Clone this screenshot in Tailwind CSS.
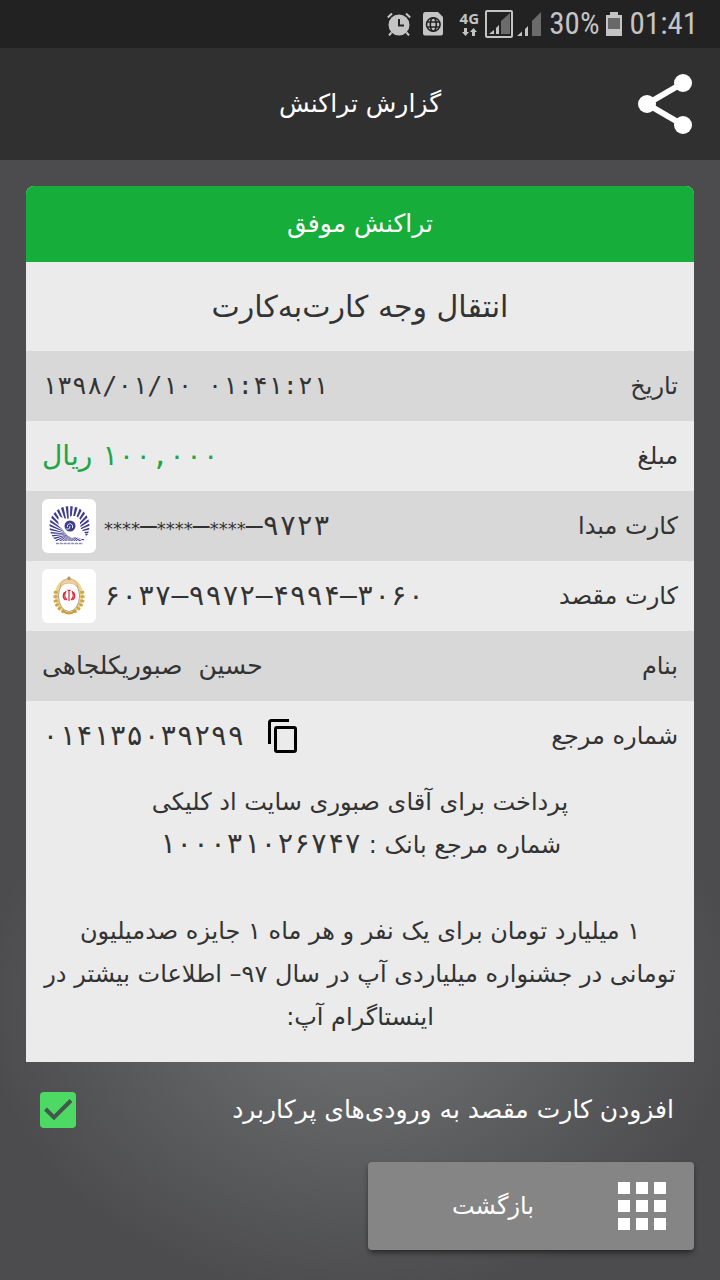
<!DOCTYPE html>
<html lang="fa" dir="rtl">
<head>
<meta charset="utf-8">
<meta name="viewport" content="width=device-width, initial-scale=1">
<title>گزارش تراکنش</title>
<script src="https://cdn.jsdelivr.net/npm/@tailwindcss/browser@4"></script>
</head>
<body class="min-h-screen flex flex-col bg-[#4c4c4e] bg-[radial-gradient(ellipse_380px_300px_at_50%_1000px,#707274,#4c4c4e)] font-['DejaVu_Sans',sans-serif] text-2xl text-[#333333]">

<!-- Status bar -->
<div dir="ltr" class="h-12 shrink-0 bg-[#222222] text-[#c4c4c4] flex items-center justify-end pr-[22px] font-['Roboto_Condensed','Liberation_Sans_Narrow',Roboto,sans-serif]">
  <svg class="w-6 h-6 mr-3" viewBox="0 0 24 24" fill="none" stroke="currentColor" aria-label="alarm"><circle cx="12" cy="13" r="10.5" fill="currentColor" stroke="none"/><path d="M.8 5.500 5 1.500M23.200 5.500 19 1.500M4.500 20.500 2 23.500M19.500 20.500 22 23.500" stroke-width="2"/><path d="M12 7v6.500h5" stroke="#222222" stroke-width="2"/></svg>
  <svg class="w-5 h-6 mr-4" viewBox="0 0 20 24" aria-label="data"><path d="M0 2.500Q0 0 2 0h13l5 5v16.500q0 2-2 2H2q-2 0-2-2z" fill="currentColor"/><g fill="none" stroke="#222222" stroke-width="1.600"><circle cx="10.300" cy="12.500" r="6.800"/><ellipse cx="10.300" cy="12.500" rx="3" ry="6.800"/><path d="M4.500 10h11.600M4.500 15h11.600"/></g></svg>
  <div class="w-5 mr-1.5 flex flex-col items-center gap-1">
    <span class="text-[15px] leading-3 font-bold font-['Open_Sans',sans-serif]">4G</span>
    <svg class="w-4 h-2" viewBox="0 0 16 8" fill="currentColor"><path d="M3 0h3v4h2L4.500 8 1 4h2zM11 8h3V4h2l-3.500-4L9 4h2z"/></svg>
  </div>
  <svg class="w-7 h-7 mr-1" viewBox="0 0 28 28" aria-label="signal 1"><rect x="1" y="1" width="26" height="26" rx="1" fill="none" stroke="currentColor" stroke-width="2"/><path d="M16 11l9-8v21h-9z" fill="#6b6b6b"/><path d="M4 24l5-4v4zM11 18l3-3v9h-3z" fill="currentColor"/></svg>
  <svg class="w-6 h-7 mr-2" viewBox="0 0 24 28" aria-label="signal 2"><path d="M15 11l9-9v24h-9z" fill="#6b6b6b"/><path d="M0 26l5-4.500V26zM8 19l3-3v10H8z" fill="currentColor"/></svg>
  <span class="text-[31px] leading-8">30%</span>
  <svg class="w-4 h-6 ml-1.5 mr-2" viewBox="0 0 16 24" aria-label="battery"><path d="M4 0h8v3h4v21H0V3h4z" fill="currentColor"/><path d="M2 6h12v11H2z" fill="#686868"/></svg>
  <span class="text-[31px] leading-8">01:41</span>
</div>

<!-- Title bar -->
<header class="h-28 shrink-0 bg-[#303030] text-white grid grid-cols-[56px_1fr_56px] items-center px-7">
  <button type="button" aria-label="اشتراک‌گذاری" class="w-14 h-16">
    <svg class="w-14 h-16" viewBox="0 0 56 64" fill="#fff"><path d="M47 11 11 32l36 21" fill="none" stroke="#fff" stroke-width="6"/><circle cx="47" cy="11" r="9"/><circle cx="11" cy="32" r="9"/><circle cx="47" cy="53" r="9"/></svg>
  </button>
  <h1 class="text-center leading-9 text-[25px]">گزارش تراکنش</h1>
</header>

<main class="px-[26px] pt-[26px] pb-[30px]">
  <section class="bg-[#ebebeb] rounded-t-lg overflow-hidden">
    <h2 class="bg-[#16ad3a] text-white h-19 flex items-center justify-center text-[25px]">تراکنش موفق</h2>
    <h3 class="h-[89px] flex items-center justify-center text-[30px]">انتقال وجه کارت‌به‌کارت</h3>
    <table class="w-full">
      <tbody>
        <tr class="h-[70px] bg-[#d8d8d8]"><th scope="row" class="pr-4 font-normal text-right">تاریخ</th><td class="pl-4"><div dir="ltr" class="font-['DejaVu_Sans_Mono',monospace] text-[25px]">۱۳۹۸/۰۱/۱۰ ۰۱:۴۱:۲۱</div></td></tr>
        <tr class="h-[70px]"><th scope="row" class="pr-4 font-normal text-right">مبلغ</th><td class="pl-4 text-left text-[28px] leading-10 text-[#20a544]"><span class="font-['DejaVu_Sans_Mono',monospace]">۱۰۰,۰۰۰</span> ریال</td></tr>
        <tr class="h-[70px] bg-[#d8d8d8]"><th scope="row" class="pr-4 font-normal text-right">کارت مبدا</th><td class="pl-4"><div dir="ltr" class="flex items-center gap-2">
          <svg class="w-[54px] h-[54px] shrink-0" viewBox="0 0 54 54" aria-label="بانک تجارت">
            <clipPath id="fan"><circle cx="27.500" cy="27" r="20"/></clipPath>
            <rect width="54" height="54" rx="6" fill="#fff"/>
            <g clip-path="url(#fan)"><circle cx="27.500" cy="35" r="17" fill="none" stroke="#3f3d8c" stroke-width="30" stroke-dasharray="1.600 1.367"/></g>
            <path d="M8 42h40v8H8z" fill="#fff"/>
            <path d="M17 17l4 2 5 1 3-3 5 0 4 3 0 5 1 5 4 4 1 5-5 1-5-2-4 1-5-3-4-5-4-4-1-5z" fill="#fff"/>
            <circle cx="28" cy="27" r="5.500" fill="#3f3d8c"/><path d="M25.500 28v-2q2.500-3 5 0v3M24 30h3l1-3" fill="none" stroke="#d8d8ee" stroke-width="1"/>
            <path d="M14 44.500h27" stroke="#8d8bb8" stroke-width="1.500" stroke-dasharray="3 .8"/></svg>
          <span class="font-['DejaVu_Sans_Mono',monospace] text-[28px] leading-10"><span class="text-lg font-['DejaVu_Sans',sans-serif]">****</span>–<span class="text-lg font-['DejaVu_Sans',sans-serif]">****</span>–<span class="text-lg font-['DejaVu_Sans',sans-serif]">****</span>–۹۷۲۳</span></div></td></tr>
        <tr class="h-[70px]"><th scope="row" class="pr-4 font-normal text-right">کارت مقصد</th><td class="pl-4"><div dir="ltr" class="flex items-center gap-2">
          <svg class="w-[54px] h-[54px] shrink-0" viewBox="0 0 54 54" aria-label="بانک ملی">
            <rect width="54" height="54" rx="6" fill="#fff"/>
            <ellipse cx="27" cy="27" rx="12.500" ry="16" fill="none" stroke="#ecd68f" stroke-width="3.500"/>
            <path d="M14 22q-3 16 9 21M40 22q3 16-9 21" fill="none" stroke="#cfa545" stroke-width="4" stroke-dasharray="2.500 1.800"/>
            <ellipse cx="27" cy="27" rx="10.500" ry="15.500" fill="#fff" stroke="#a9a18a" stroke-width="1"/>
            <path d="M18 18q1-7 9-8 8 1 9 8-4-4-9-4t-9 4z" fill="#f3cfa4" stroke="#d1ab68" stroke-width=".7"/>
            <path d="M27 7l2 2.500-2 2-2-2z" fill="#a3986d"/>
            <path d="M27 22v10M24 22q-3 5 1 9M30 22q3 5-1 9M22.500 23q-3 5 1 8M31.500 23q3 5-1 8M25.500 21q1.500 1 3 0" fill="none" stroke="#de2434" stroke-width="1.200"/>
            <path d="M21 42q6 5 12 0" fill="none" stroke="#c99b37" stroke-width="2"/></svg>
          <span class="font-['DejaVu_Sans_Mono',monospace] text-[28px] leading-10">۶۰۳۷–۹۹۷۲–۴۹۹۴–۳۰۶۰</span></div></td></tr>
        <tr class="h-[70px] bg-[#d8d8d8]"><th scope="row" class="pr-4 font-normal text-right">بنام</th><td class="pl-4 text-left text-[25px]">حسین&nbsp; صبوریکلجاهی</td></tr>
        <tr class="h-[70px]"><th scope="row" class="pr-4 font-normal text-right">شماره مرجع</th><td class="pl-4"><div dir="ltr" class="flex items-center gap-6"><span class="font-['DejaVu_Sans_Mono',monospace] text-[28px] leading-10">۰۱۴۱۳۵۰۳۹۲۹۹</span>
          <button type="button" aria-label="کپی"><svg class="w-[30px] h-[34px]" viewBox="0 0 30 34" fill="none" stroke="#000" stroke-width="3"><path d="M21 1.500H3.500q-2 0-2 2V25"/><rect x="7.500" y="8.500" width="20" height="24" rx="1.500"/></svg></button></div></td></tr>
      </tbody>
    </table>
    <div class="text-center leading-[43px] pt-2.5 pb-[23px] px-3">
      <p>پرداخت برای آقای صبوری سایت اد کلیکی</p>
      <p>شماره مرجع بانک : <span class="font-['DejaVu_Sans_Mono',monospace] text-[28px] leading-8">۱۰۰۰۳۱۰۲۶۷۴۷</span></p>
      <p class="pt-[43px]">۱ میلیارد تومان برای یک نفر و هر ماه ۱ جایزه صدمیلیون<br>تومانی در جشنواره میلیاردی آپ در سال ۹۷– اطلاعات بیشتر در<br>اینستاگرام آپ:</p>
    </div>
  </section>

  <label class="flex items-center justify-between h-[96px] pr-5 pl-3.5 text-white text-[25px]">
    <span>افزودن کارت مقصد به ورودی‌های پرکاربرد</span>
    <span class="grid w-9 h-9">
      <input type="checkbox" checked class="peer appearance-none col-start-1 row-start-1 w-9 h-9 rounded bg-[#4cda64]">
      <svg class="col-start-1 row-start-1 w-9 h-9 hidden peer-checked:block pointer-events-none" viewBox="0 0 36 36" fill="none" stroke="#45564a" stroke-width="4"><path d="M5.500 17 14 25.500 31 8.500"/></svg>
    </span>
  </label>

  <button type="button" class="mt-1 w-[326px] h-22 rounded bg-[#858585] text-white shadow-md shadow-black/40 flex items-center pr-7">
    <svg class="w-12 h-12" viewBox="0 0 48 48" fill="#fff"><path d="M0 0h12v12H0zM18 0h12v12H18zM36 0h12v12H36zM0 18h12v12H0zM18 18h12v12H18zM36 18h12v12H36zM0 36h12v12H0zM18 36h12v12H18zM36 36h12v12H36z"/></svg>
    <span class="flex-1 text-center">بازگشت</span>
  </button>
</main>
</body>
</html>
